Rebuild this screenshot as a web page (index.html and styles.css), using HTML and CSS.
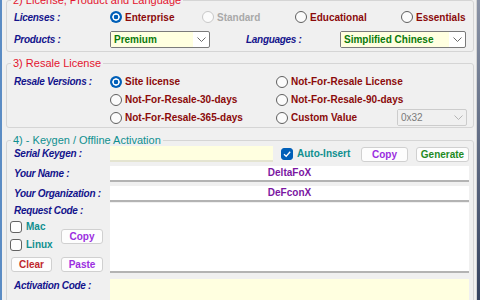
FILE: index.html
```html
<html>

<head>
  <title>Keygen</title>
  <link rel="stylesheet" href="styles.css">
</head>

<body>
  <div class="window">
    <div class="frame"></div>
    <div class="client">

      <fieldset class="group g1">
        <legend class="red">2) License, Product and Language</legend>
        <div class="lic-row">
          <span class="lbl">Licenses :</span>
          <label class="opt"><span class="rb on"></span>Enterprise</label>
          <label class="opt off"><span class="rb"></span>Standard</label>
          <label class="opt"><span class="rb"></span>Educational</label>
          <label class="opt"><span class="rb"></span>Essentials</label>
        </div>
        <div class="prod-row">
          <span class="lbl">Products :</span>
          <div class="combo"><span class="val">Premium</span><span class="arrow"><svg width="9" height="5" viewBox="0 0 9 5"><path d="M0.5 0.5 L4.5 4.5 L8.5 0.5" fill="none" stroke="#6b6b6b" stroke-width="1"/></svg></span></div>
          <span class="lbl lang">Languages :</span>
          <div class="combo"><span class="val">Simplified Chinese</span><span class="arrow"><svg width="9" height="5" viewBox="0 0 9 5"><path d="M0.5 0.5 L4.5 4.5 L8.5 0.5" fill="none" stroke="#6b6b6b" stroke-width="1"/></svg></span></div>
        </div>
      </fieldset>

      <fieldset class="group g2">
        <legend class="red">3) Resale License</legend>
        <div class="resale">
          <span class="lbl">Resale Versions :</span>
          <label class="opt"><span class="rb on"></span>Site license</label>
          <label class="opt"><span class="rb"></span>Not-For-Resale License</label>
          <span></span>
          <label class="opt"><span class="rb"></span>Not-For-Resale-30-days</label>
          <label class="opt"><span class="rb"></span>Not-For-Resale-90-days</label>
          <span></span>
          <label class="opt"><span class="rb"></span>Not-For-Resale-365-days</label>
          <div class="custom">
            <label class="opt"><span class="rb"></span>Custom Value</label>
            <div class="combo dis"><span class="val">0x32</span><span class="arrow"><svg width="9" height="5" viewBox="0 0 9 5"><path d="M0.5 0.5 L4.5 4.5 L8.5 0.5" fill="none" stroke="#b5b5b5" stroke-width="1"/></svg></span></div>
          </div>
        </div>
      </fieldset>

      <fieldset class="group g3">
        <legend class="teal">4) - Keygen / Offline Activation</legend>

        <div class="kg-row serial">
          <span class="lbl">Serial Keygen :</span>
          <div class="serial-line">
            <div class="box yellow short"></div>
            <span class="cb on"><svg width="10" height="10" viewBox="0 0 10 10"><path d="M2 5.2 L4.2 7.3 L8.2 2.8" fill="none" stroke="#fff" stroke-width="1.3"/></svg></span>
            <span class="teal-txt">Auto-Insert</span>
            <button class="btn purple push">Copy</button>
            <button class="btn green">Generate</button>
          </div>
        </div>

        <div class="kg-row name">
          <span class="lbl">Your Name :</span>
          <div class="box white">DeltaFoX</div>
        </div>

        <div class="kg-row org">
          <span class="lbl">Your Organization :</span>
          <div class="box white">DeFconX</div>
        </div>

        <div class="kg-row request">
          <div class="req-side">
            <span class="lbl top">Request Code :</span>
            <label class="chk mac"><span class="cb"></span>Mac</label>
            <label class="chk linux"><span class="cb"></span>Linux</label>
            <button class="btn purple copy2">Copy</button>
            <button class="btn red-txt clear">Clear</button>
            <button class="btn purple paste">Paste</button>
          </div>
          <div class="box white area"></div>
        </div>

        <div class="kg-row activation">
          <span class="lbl top">Activation Code :</span>
          <div class="box yellow big"></div>
        </div>
      </fieldset>

    </div>
    <div class="desk"></div>
  </div>
</body>

</html>
```
FILE: styles.css
```css
* {
  box-sizing: border-box;
}

html,
body {
  margin: 0;
  height: 300px;
  overflow: hidden;
}

body {
  font-family: "Liberation Sans", Arial, sans-serif;
  font-size: 10px;
  background: #f0f0f0;
}

.window {
  display: flex;
  height: 300px;
}

.frame {
  width: 2px;
  background: #5b8cc4;
}

.client {
  width: 474px;
  background: #f0f0f0;
}

.desk {
  flex: 1;
  border-left: 1px solid #d4d4d4;
  background: linear-gradient(#8a93a6, #34425f);
}

/* group boxes */
.group {
  margin: 0 0 0 4px;
  width: 468px;
  min-width: 0;
  padding: 0 4px 0 0;
  border: 1px solid #d5d5d5;
  border-radius: 3px;
}

legend {
  margin-left: 4px;
  padding: 0 2px;
  font-size: 11px;
  line-height: 12px;
}

.red {
  color: #e3142f;
}

.teal {
  color: #0f8f8f;
}

.lbl {
  padding-left: 7px;
  color: #14148c;
  font-weight: bold;
  font-style: italic;
  letter-spacing: -0.3px;
  white-space: nowrap;
}

.opt {
  display: flex;
  align-items: center;
  gap: 3px;
  color: #8b0a0a;
  font-weight: bold;
  white-space: nowrap;
}

.opt.off {
  color: #a9a9a9;
}

.rb {
  width: 12px;
  height: 12px;
  border-radius: 50%;
  border: 1px solid #5f5f5f;
  background: #fbfbfb;
}

.rb.on {
  border: none;
  background: radial-gradient(circle, #005fb8 0 2px, #fff 2.6px 3.4px, #005fb8 4px);
}

.off .rb {
  border-color: #c8c8c8;
}

.g1 {
  margin-top: -6px;
  padding-bottom: 3px;
}

.lic-row {
  display: grid;
  grid-template-columns: 103px 92px 93px 106px 1fr;
  align-items: center;
  height: 18px;
  margin-top: 2px;
}

.prod-row {
  display: grid;
  grid-template-columns: 103px 100px 130px 126px;
  align-items: center;
  height: 18px;
  margin-top: 4px;
}

.lang {
  padding-left: 36px;
}

.combo {
  display: flex;
  height: 17px;
  border: 1px solid #7a7a7a;
  border-radius: 2px;
  background: #fff;
}

.combo .val {
  flex: 1;
  padding-left: 3px;
  line-height: 15px;
  background: #ffffe0;
  color: #0a7a0a;
  font-weight: bold;
}

.combo .arrow {
  width: 16px;
  display: flex;
  align-items: center;
  justify-content: center;
}

.combo.dis {
  width: 70px;
  margin-left: auto;
  margin-right: 2px;
  border-color: #cccccc;
  background: #f0f0f0;
}

.combo.dis .val {
  background: #f0f0f0;
  color: #7a7a7a;
  font-weight: normal;
}

.g2 {
  margin-top: 5px;
  padding-top: 4px;
  padding-bottom: 1px;
}

.resale {
  display: grid;
  grid-template-columns: 103px 166px 1fr;
  grid-auto-rows: 17px;
  row-gap: 1px;
  align-items: center;
}

.custom {
  display: flex;
  align-items: center;
}

/* keygen */
.g3 {
  margin-top: 6px;
  padding-bottom: 20px;
}

.kg-row {
  display: grid;
  grid-template-columns: 103px 1fr;
  line-height: 16px;
}

.kg-row.name,
.kg-row.org {
  margin-top: 4px;
}

.kg-row.request {
  margin-top: 1px;
}

.kg-row.activation {
  margin-top: 6px;
}

.serial-line {
  display: flex;
  align-items: center;
  height: 16px;
}

.box {
  height: 16px;
  border-bottom: 2px solid #b3b3b3;
  text-align: center;
  color: #7b16a2;
  font-weight: bold;
  line-height: 14px;
}

.yellow {
  background: #ffffe0;
  border-bottom-color: #e4e4d0;
}

.white {
  background: #fff;
}

.short {
  width: 163px;
}

.area {
  height: 70px;
}

.big {
  height: 40px;
}

.cb {
  width: 12px;
  height: 12px;
  border: 1px solid #626262;
  border-radius: 3px;
  background: #fdfdfd;
  display: flex;
  align-items: center;
  justify-content: center;
}

.cb.on {
  margin-left: 8px;
  border-color: #005fb8;
  background: #005fb8;
}

.teal-txt {
  margin-left: 4px;
  color: #0f8f8f;
  font-weight: bold;
}

.btn {
  height: 15px;
  padding: 0;
  border: 1px solid #d0d0d0;
  border-radius: 3px;
  background: #fdfdfd;
  font-family: "Liberation Sans", Arial, sans-serif;
  font-size: 10px;
  font-weight: bold;
  line-height: 13px;
}

.purple {
  color: #9b2ee0;
}

.green {
  color: #1f8a1f;
}

.red-txt {
  color: #c0282d;
}

.serial-line .btn.purple {
  width: 47px;
}

.serial-line .btn.green {
  width: 53px;
  margin-left: 8px;
}

.push {
  margin-left: auto;
}

.req-side {
  display: grid;
  grid-template-columns: 48px 42px;
  grid-template-rows: 15px 18px 18px 18px;
  column-gap: 3px;
  padding-left: 3px;
  align-items: center;
}

.req-side .top {
  grid-column: 1 / 3;
  padding-left: 4px;
  line-height: 14px;
  align-self: end;
}

.chk {
  display: flex;
  align-items: center;
  gap: 4px;
  color: #0f8f8f;
  font-weight: bold;
}

.mac {
  grid-column: 1;
  grid-row: 2;
}

.linux {
  grid-column: 1;
  grid-row: 3;
}

.copy2 {
  grid-column: 2;
  grid-row: 2 / 4;
}

.clear {
  grid-row: 4;
  grid-column: 1;
  width: 41px;
  margin-left: 1px;
  align-self: end;
}

.paste {
  grid-row: 4;
  grid-column: 2;
  align-self: end;
}

.activation .top {
  padding-top: 1px;
  line-height: 12px;
}
```
